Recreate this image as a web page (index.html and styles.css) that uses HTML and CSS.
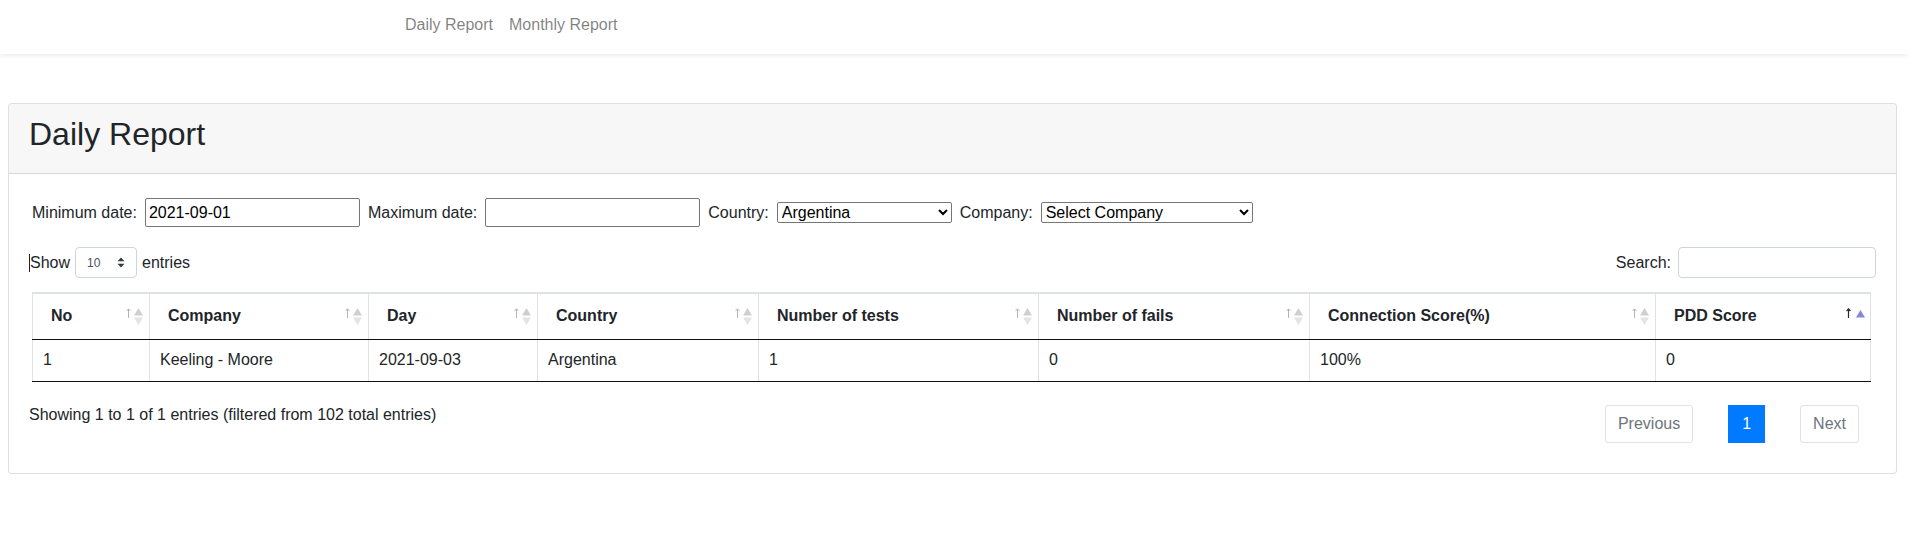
FILE: index.html
```html
<!DOCTYPE html>
<html lang="en">
<head>
<meta charset="utf-8">
<title>Daily Report</title>
<link rel="stylesheet" href="styles.css">
</head>
<body>
<nav class="navbar">
  <a class="nav-link" href="#">Daily Report</a>
  <a class="nav-link" href="#">Monthly Report</a>
</nav>

<main class="main">
  <section class="card">
    <header class="card-header">
      <h2 class="card-title">Daily Report</h2>
    </header>
    <div class="card-body">
      <div class="filters">
        <label class="flabel" for="min">Minimum date:</label>
        <input class="date-input" id="min" type="text" value="2021-09-01">
        <label class="flabel" for="max">Maximum date:</label>
        <input class="date-input" id="max" type="text" value="">
        <label class="flabel" for="country">Country:</label>
        <select class="fselect country" id="country"><option>Argentina</option></select>
        <label class="flabel" for="company">Company:</label>
        <select class="fselect company" id="company"><option>Select Company</option></select>
      </div>

      <div class="dt-top">
        <div class="dt-length">
          <span class="caret"></span>Show
          <span class="len-wrap">
            <select class="len-select"><option>10</option></select>
            <svg class="len-arrows" width="8" height="11" viewBox="0 0 8 11"><path d="M4 0.5 L7.5 4.3 L0.5 4.3 Z M4 10.5 L7.5 6.7 L0.5 6.7 Z" fill="#343a40"/></svg>
          </span>
          entries
        </div>
        <div class="dt-filter">
          <label class="search-label" for="search">Search:</label>
          <input class="search-input" id="search" type="search">
        </div>
      </div>

      <div class="table-wrap">
        <table class="data-table">
          <thead>
            <tr>
              <th class="c1 sorting">No<svg class="arr" width="5" height="10" viewBox="0 0 5 10"><path d="M2.5 10 V1 M0.6 3 L2.5 0.8 L4.4 3" stroke="#b5b5b5" fill="none" stroke-width="1"/></svg><svg class="tri" width="9" height="17" viewBox="0 0 9 17"><path d="M4.5 0 L9 7.5 L0 7.5 Z" fill="#cfcfcf"/><path d="M0 9.5 L9 9.5 L4.5 17 Z" fill="#e4e4e4"/></svg></th>
              <th class="c2 sorting">Company<svg class="arr" width="5" height="10" viewBox="0 0 5 10"><path d="M2.5 10 V1 M0.6 3 L2.5 0.8 L4.4 3" stroke="#b5b5b5" fill="none" stroke-width="1"/></svg><svg class="tri" width="9" height="17" viewBox="0 0 9 17"><path d="M4.5 0 L9 7.5 L0 7.5 Z" fill="#cfcfcf"/><path d="M0 9.5 L9 9.5 L4.5 17 Z" fill="#e4e4e4"/></svg></th>
              <th class="c3 sorting">Day<svg class="arr" width="5" height="10" viewBox="0 0 5 10"><path d="M2.5 10 V1 M0.6 3 L2.5 0.8 L4.4 3" stroke="#b5b5b5" fill="none" stroke-width="1"/></svg><svg class="tri" width="9" height="17" viewBox="0 0 9 17"><path d="M4.5 0 L9 7.5 L0 7.5 Z" fill="#cfcfcf"/><path d="M0 9.5 L9 9.5 L4.5 17 Z" fill="#e4e4e4"/></svg></th>
              <th class="c4 sorting">Country<svg class="arr" width="5" height="10" viewBox="0 0 5 10"><path d="M2.5 10 V1 M0.6 3 L2.5 0.8 L4.4 3" stroke="#b5b5b5" fill="none" stroke-width="1"/></svg><svg class="tri" width="9" height="17" viewBox="0 0 9 17"><path d="M4.5 0 L9 7.5 L0 7.5 Z" fill="#cfcfcf"/><path d="M0 9.5 L9 9.5 L4.5 17 Z" fill="#e4e4e4"/></svg></th>
              <th class="c5 sorting">Number of tests<svg class="arr" width="5" height="10" viewBox="0 0 5 10"><path d="M2.5 10 V1 M0.6 3 L2.5 0.8 L4.4 3" stroke="#b5b5b5" fill="none" stroke-width="1"/></svg><svg class="tri" width="9" height="17" viewBox="0 0 9 17"><path d="M4.5 0 L9 7.5 L0 7.5 Z" fill="#cfcfcf"/><path d="M0 9.5 L9 9.5 L4.5 17 Z" fill="#e4e4e4"/></svg></th>
              <th class="c6 sorting">Number of fails<svg class="arr" width="5" height="10" viewBox="0 0 5 10"><path d="M2.5 10 V1 M0.6 3 L2.5 0.8 L4.4 3" stroke="#b5b5b5" fill="none" stroke-width="1"/></svg><svg class="tri" width="9" height="17" viewBox="0 0 9 17"><path d="M4.5 0 L9 7.5 L0 7.5 Z" fill="#cfcfcf"/><path d="M0 9.5 L9 9.5 L4.5 17 Z" fill="#e4e4e4"/></svg></th>
              <th class="c7 sorting">Connection Score(%)<svg class="arr" width="5" height="10" viewBox="0 0 5 10"><path d="M2.5 10 V1 M0.6 3 L2.5 0.8 L4.4 3" stroke="#b5b5b5" fill="none" stroke-width="1"/></svg><svg class="tri" width="9" height="17" viewBox="0 0 9 17"><path d="M4.5 0 L9 7.5 L0 7.5 Z" fill="#cfcfcf"/><path d="M0 9.5 L9 9.5 L4.5 17 Z" fill="#e4e4e4"/></svg></th>
              <th class="c8 sorted">PDD Score<svg class="arr" width="5" height="10" viewBox="0 0 5 10"><path d="M2.5 10 V1 M0.6 3 L2.5 0.8 L4.4 3" stroke="#2b2b2b" fill="none" stroke-width="1.2"/></svg><svg class="tri asc" width="9" height="8" viewBox="0 0 9 8"><path d="M4.5 0 L9 7.5 L0 7.5 Z" fill="#8585e0"/></svg></th>
            </tr>
          </thead>
          <tbody>
            <tr>
              <td>1</td>
              <td>Keeling - Moore</td>
              <td>2021-09-03</td>
              <td>Argentina</td>
              <td>1</td>
              <td>0</td>
              <td>100%</td>
              <td>0</td>
            </tr>
          </tbody>
        </table>
      </div>

      <div class="dt-bottom">
        <div class="dt-info">Showing 1 to 1 of 1 entries (filtered from 102 total entries)</div>
        <div class="pagination">
          <a class="page-btn" href="#">Previous</a>
          <a class="page-btn current" href="#">1</a>
          <a class="page-btn" href="#">Next</a>
        </div>
      </div>
    </div>
  </section>
</main>
</body>
</html>
```

FILE: styles.css
```css
* { box-sizing: border-box; }

html, body {
  margin: 0;
  padding: 0;
  background: #fff;
}

body {
  font-family: "Liberation Sans", Arial, sans-serif;
  font-size: 16px;
  line-height: 1.5;
  color: #212529;
}

a { text-decoration: none; }

/* Navbar */
.navbar {
  height: 54px;
  display: flex;
  align-items: flex-start;
  padding: 13px 0 0 397px;
  background: #fff;
  box-shadow: 0 2px 4px rgba(0, 0, 0, 0.075);
}

.nav-link {
  color: rgba(0, 0, 0, 0.5);
  padding: 0 8px;
  line-height: 24px;
}

/* Main / card */
.main {
  padding: 49px 11px 0 8px;
}

.card {
  border: 1px solid rgba(0, 0, 0, 0.125);
  border-radius: 4px;
  background: #fff;
}

.card-header {
  background: rgba(0, 0, 0, 0.03);
  border-bottom: 1px solid rgba(0, 0, 0, 0.125);
  padding: 11px 20px 12px;
  border-radius: 4px 4px 0 0;
}

.card-title {
  margin: 0 0 8px;
  font-size: 32px;
  font-weight: 500;
  line-height: 1.2;
}

.card-body {
  padding: 24px 20px 30px;
}

/* Filters */
.filters {
  display: flex;
  align-items: center;
  gap: 8px;
  padding-left: 3px;
  height: 29px;
}

.flabel {
  color: #212529;
}

.date-input {
  width: 215px;
  height: 29px;
  border: 1px solid #767676;
  border-radius: 2px;
  padding: 0 3px;
  font-family: "Liberation Sans", Arial, sans-serif;
  font-size: 16px;
  color: #000;
}

.fselect {
  height: 21px;
  font-family: "Liberation Sans", Arial, sans-serif;
  font-size: 16px;
  color: #000;
  border: 1px solid #767676;
  border-radius: 2px;
  background: #fff;
}

.country { width: 175px; }
.company { width: 212px; }

/* Datatable top */
.dt-top {
  display: flex;
  justify-content: space-between;
  align-items: center;
  margin-top: 20px;
  height: 31px;
}

.dt-length {
  display: flex;
  align-items: center;
  gap: 5px;
}

.caret {
  display: inline-block;
  width: 1px;
  height: 18px;
  background: #212529;
  margin-right: -5px;
}

.len-wrap {
  position: relative;
  display: inline-block;
  height: 31px;
}

.len-select {
  appearance: none;
  -webkit-appearance: none;
  width: 62px;
  height: 31px;
  border: 1px solid #ced4da;
  border-radius: 4px;
  background: #fff;
  font-family: "Liberation Sans", Arial, sans-serif;
  font-size: 12px;
  color: #495057;
  padding: 0 0 0 11px;
}

.len-arrows {
  position: absolute;
  right: 12px;
  top: 10px;
  pointer-events: none;
}

.dt-filter {
  display: flex;
  align-items: center;
  gap: 7px;
}

.search-input {
  width: 198px;
  height: 31px;
  border: 1px solid #ced4da;
  border-radius: 4px;
  padding: 0 8px;
  font-family: "Liberation Sans", Arial, sans-serif;
  font-size: 14px;
}

/* Table */
.table-wrap {
  margin-top: 14px;
  padding-left: 3px;
}

.data-table {
  width: 1838px;
  border-collapse: collapse;
  table-layout: fixed;
}

.data-table th,
.data-table td {
  border-left: 1px solid #dee2e6;
  border-right: 1px solid #dee2e6;
  text-align: left;
  line-height: 24px;
  white-space: nowrap;
}

.data-table th {
  position: relative;
  font-weight: 700;
  padding: 10px 18px 11px;
  border-top: 2px solid #dee2e6;
  border-bottom: 1px solid #111;
}

.data-table td {
  padding: 8px 10px 9px;
  border-bottom: 1px solid #111;
}

.c1 { width: 117px; }
.c2 { width: 219px; }
.c3 { width: 169px; }
.c4 { width: 221px; }
.c5 { width: 280px; }
.c6 { width: 271px; }
.c7 { width: 346px; }
.c8 { width: 215px; }

.arr {
  position: absolute;
  right: 18px;
  top: 14px;
}

.tri {
  position: absolute;
  right: 6px;
  top: 14px;
}

.sorted .arr { right: 19px; top: 14px; }
.tri.asc { right: 5px; top: 16px; }

/* Bottom */
.dt-bottom {
  display: flex;
  justify-content: space-between;
  align-items: flex-start;
  margin-top: 21px;
}

.dt-info {
  line-height: 24px;
}

.pagination {
  display: flex;
  gap: 35px;
  margin-top: 2px;
  margin-right: 17px;
}

.page-btn {
  display: block;
  height: 38px;
  line-height: 36px;
  padding: 0 12px;
  border: 1px solid #dee2e6;
  border-radius: 3px;
  color: #6c757d;
  background: #fff;
}

.page-btn.current {
  background: #007bff;
  border-color: #007bff;
  color: #fff;
  border-radius: 0;
  padding: 0 13px;
}
```
